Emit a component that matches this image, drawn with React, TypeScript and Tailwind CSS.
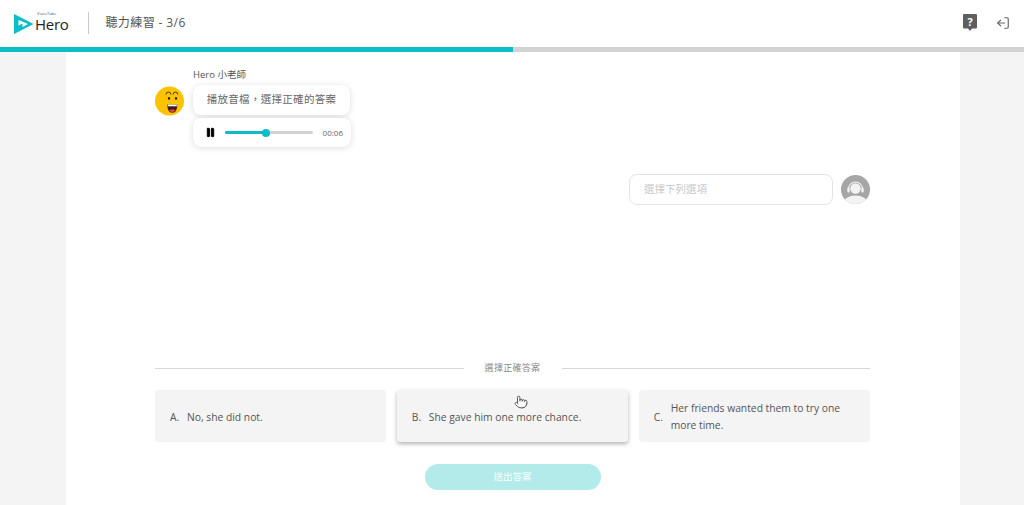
import { Pause, LogOut, Pointer } from 'lucide-react';

const font = { fontFamily: '"Open Sans", "Noto Sans CJK TC", sans-serif' };

function Logo() {
  return (
    <div className="flex items-end gap-[1px] mb-[2px]">
      <svg width="20" height="20" viewBox="0 0 20 20" className="-mb-[1px]">
        <path d="M0 0 L19.5 10 L0 20 Z M4.5 6 L4.5 11.5 L8.5 9.5 L8.5 13 L14 10 Z" fill="#0bbdc7" fillRule="evenodd" />
      </svg>
      <div className="flex flex-col items-start">
        <span className="text-[4px] leading-[5px] text-gray-600 ml-[2px]">VoiceTube</span>
        <span className="text-[15px] leading-[17px] text-[#222] tracking-[-0.3px]">Hero</span>
      </div>
    </div>
  );
}

function TeacherFace() {
  return (
    <svg width="30" height="30" viewBox="0 0 30 30">
      <circle cx="14.5" cy="15" r="14.5" fill="#fdc300" />
      <path d="M11.5 9.5 a2.4 2.4 0 0 1 4.8 0 M18.5 9.5 a2.4 2.4 0 0 1 4.8 0" stroke="#4a3610" strokeWidth="1" fill="none" transform="translate(-0.5 -1)" />
      <ellipse cx="14" cy="12.5" rx="1.1" ry="1.4" fill="#2b1c0c" />
      <ellipse cx="21" cy="12.5" rx="1.1" ry="1.4" fill="#2b1c0c" />
      <path d="M12.3 18.5 H22.3 Q22.3 26.7 17.3 26.7 Q12.3 26.7 12.3 18.5 Z" fill="#3a1c12" />
      <path d="M14 24.5 Q17.3 22 20.6 24.5 Q17.3 27.5 14 24.5 Z" fill="#e5403a" />
      <rect x="12.8" y="18.5" width="9" height="1.8" fill="#fff" />
    </svg>
  );
}

function UserAvatar() {
  return (
    <svg width="29" height="29" viewBox="0 0 29 29">
      <defs>
        <clipPath id="round">
          <circle cx="14.5" cy="14.5" r="14.5" />
        </clipPath>
      </defs>
      <g clipPath="url(#round)">
        <rect width="29" height="29" fill="#a6a6a6" />
        <ellipse cx="14.5" cy="29" rx="12.5" ry="8.5" fill="#f3f3f3" />
        <circle cx="14.5" cy="13.5" r="5.2" fill="#f3f3f3" />
        <path d="M7.5 14 a7 7 0 0 1 14 0" stroke="#f3f3f3" strokeWidth="1.2" fill="none" />
        <rect x="6.3" y="12.5" width="2.4" height="5" rx="1" fill="#f3f3f3" />
        <rect x="20.3" y="12.5" width="2.4" height="5" rx="1" fill="#f3f3f3" />
      </g>
    </svg>
  );
}

const options = [
  { key: 'A.', text: 'No, she did not.', hover: false },
  { key: 'B.', text: 'She gave him one more chance.', hover: true },
  { key: 'C.', text: 'Her friends wanted them to try one more time.', hover: false },
];

export default function App() {
  return (
    <div className="h-[505px] overflow-hidden flex flex-col bg-[#f4f4f4]" style={font}>
      {/* Header */}
      <header className="h-[47px] bg-white flex items-center pb-[2px] pl-[14px] pr-[14px] shrink-0">
        <Logo />
        <div className="w-px h-[22px] bg-[#c8c8c8] ml-[20px] mr-[16px]" />
        <span className="text-[12px] text-[#555] tracking-[0.4px]">聽力練習 - 3/6</span>
        <div className="ml-auto flex items-center gap-[19px]">
          <svg width="14" height="17" viewBox="0 0 14 17">
            <path d="M1 0 H13 a1 1 0 0 1 1 1 V13.5 a1 1 0 0 1 -1 1 H9 L7 17 L5 14.5 H1 a1 1 0 0 1 -1 -1 V1 a1 1 0 0 1 1 -1 Z" fill="#5f5f5f" />
            <text x="7" y="11.5" textAnchor="middle" fontSize="11" fontWeight="700" fill="#fff">?</text>
          </svg>
          <LogOut size={14} className="text-[#666] rotate-180" strokeWidth={2} />
        </div>
      </header>

      {/* Progress */}
      <div className="h-[5px] bg-[#d2d2d2] shrink-0">
        <div className="h-full w-[513px] bg-[#0bbdc7]" />
      </div>

      {/* Main */}
      <main className="relative w-[894px] ml-[66px] flex-1 bg-white pl-[89px] pr-[90px] pt-[16px] flex flex-col">
        <div className="flex gap-[8px]">
          <div className="pt-[18px]">
            <TeacherFace />
          </div>
          <div className="flex flex-col items-start">
            <span className="text-[9.5px] leading-[14px] text-[#555] mb-[3px]">Hero 小老師</span>
            <div className="h-[30px] w-[157px] rounded-[8px] bg-white shadow-[0_1px_6px_rgba(0,0,0,0.14)] flex items-center justify-center text-[10.5px] text-[#666] tracking-[0.3px]">
              播放音檔，選擇正確的答案
            </div>
            <div className="mt-[3px] h-[29px] w-[158px] rounded-[8px] bg-white shadow-[0_1px_6px_rgba(0,0,0,0.14)] flex items-center pl-[12px] pr-[8px]">
              <Pause size={11} className="text-black" fill="#000" strokeWidth={2} />
              <div className="relative ml-[9px] w-[88px] h-[3px] rounded-full bg-[#d2d2d2]">
                <div className="h-full w-[41px] rounded-full bg-[#0bbdc7]" />
                <div className="absolute left-[37px] -top-[2.5px] w-[8px] h-[8px] rounded-full bg-[#0bbdc7]" />
              </div>
              <span className="ml-auto text-[8px] text-[#666]">00:06</span>
            </div>
          </div>
        </div>

        <div className="flex justify-end items-center gap-[8px] mt-[27px]">
          <div className="w-[204px] h-[31px] rounded-[8px] border border-[#e4e4e4] flex items-center pl-[14px] text-[10.5px] text-[#c8c8c8]">
            選擇下列選項
          </div>
          <UserAvatar />
        </div>

        <div className="mt-[156px] flex items-center">
          <div className="flex-1 h-px bg-[#d8d8d8]" />
          <span className="w-[98px] text-center text-[9px] leading-[14px] text-[#888] tracking-[0.3px]">選擇正確答案</span>
          <div className="flex-1 h-px bg-[#d8d8d8]" />
        </div>

        <div className="mt-[15px] grid grid-cols-3 gap-[10.5px]">
          {options.map((o) => (
            <div
              key={o.key}
              className={`h-[52px] rounded-[3px] bg-[#f4f4f4] flex items-center pt-[2px] pl-[15px] pr-[20px] text-[10.3px] leading-[17px] text-[#555] ${
                o.hover ? 'shadow-[0_2px_4px_rgba(0,0,0,0.3)]' : ''
              }`}
            >
              <span className="w-[17px] shrink-0">{o.key}</span>
              <span>{o.text}</span>
            </div>
          ))}
        </div>

        <button className="mt-[22px] self-center w-[176px] h-[26px] rounded-full bg-[#b2ebe9] text-white text-[9.5px]">
          送出答案
        </button>

        <Pointer size={14} className="absolute left-[448px] top-[343px] text-[#444]" fill="#fff" strokeWidth={1.5} />
      </main>
    </div>
  );
}
